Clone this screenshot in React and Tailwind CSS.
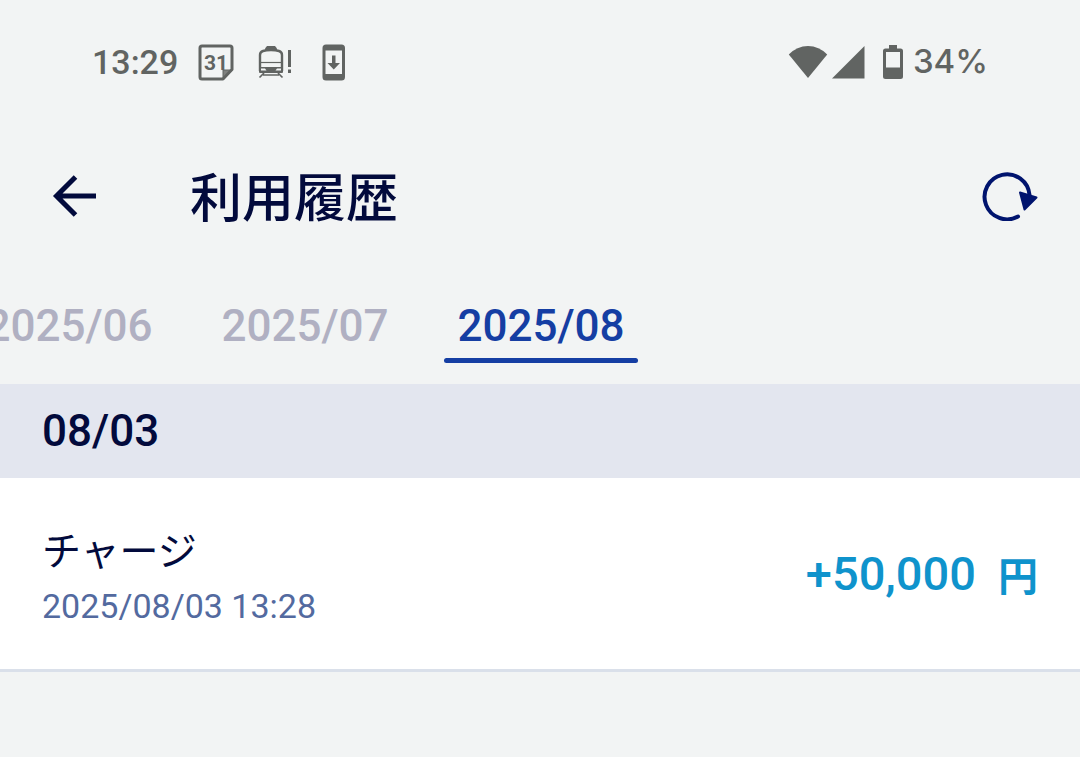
const tabs = [
  { label: '2025/06', active: false },
  { label: '2025/07', active: false },
  { label: '2025/08', active: true },
];

function CalendarIcon() {
  return (
    <svg width="36" height="37" viewBox="0 0 36 37" fill="none" stroke="#616462" aria-hidden="true">
      <path d="M4 2h28a2 2 0 0 1 2 2v21.500L25 35H4a2 2 0 0 1-2-2V4a2 2 0 0 1 2-2Z" strokeWidth="3" strokeLinejoin="round" />
      <path d="M25 35v-9h9Z" strokeWidth="1" fill="#616462" fillOpacity="0.800" />
      <text x="18" y="25.500" textAnchor="middle" fontSize="21" fontWeight="700" fill="#616462" stroke="none" className="font-['Roboto',sans-serif]">31</text>
    </svg>
  );
}

function TrainIcon() {
  return (
    <svg width="36" height="34" viewBox="0 0 36 34" fill="none" stroke="#616462" aria-hidden="true">
      <path d="M7 5V3.500L9 1h8l2 2.500V5Z" fill="#616462" stroke="none" />
      <path d="M2 26V10Q2 7 5 6t8-1 8 1 3 4v16" strokeWidth="2.400" />
      <path d="M2 17.500h22" strokeWidth="1.200" />
      <path d="M1 22h24v5q0 1-1 1H2q-1 0-1-1Z" fill="#616462" stroke="none" />
      <path d="M3 23.500h4l1.500 2H3ZM23 23.500h-4l-1.500 2H23Z" fill="#f2f4f4" stroke="none" />
      <path d="m6 28-4.500 4.500M20 28l4.500 4.500M5 30h16" strokeWidth="1.700" />
      <path d="M31.500 5v17" strokeWidth="3" />
      <path d="M30 24.500h3v3.500h-3Z" fill="#616462" stroke="none" />
    </svg>
  );
}

function UpdateIcon() {
  return (
    <svg width="24" height="37" viewBox="0 0 24 37" fill="#616462" aria-hidden="true">
      <path fillRule="evenodd" d="M4 .500h15.500Q23 .500 23 4v29q0 3.500-3.500 3.500H4Q.500 36.500.500 33V4Q.500.500 4 .500ZM3.500 6.500v23.500h16.500V6.500Z" />
      <path d="M10 11.500h3.500V19H18l-6.250 6.500L5.500 19H10Z" />
    </svg>
  );
}

function WifiIcon() {
  return (
    <svg width="40" height="34" viewBox="0 0 40 34" fill="#616462" aria-hidden="true">
      <path d="M20 33 .800 9.500Q9 1 20 1t19.200 8.500Z" />
    </svg>
  );
}

function SignalIcon() {
  return (
    <svg width="33" height="34" viewBox="0 0 33 34" fill="#616462" aria-hidden="true">
      <path d="M0 33.500 32.500 1v32.500Z" />
    </svg>
  );
}

function BatteryIcon() {
  return (
    <svg width="20" height="34" viewBox="0 0 20 34" fill="#616462" aria-hidden="true">
      <path fillRule="evenodd" d="M6 0h8v3.500h3.500Q20 3.500 20 6v25.500q0 2.500-2.500 2.500h-15Q0 34 0 31.500V6q0-2.500 2.500-2.500H6ZM3 7v15.500h14V7Z" />
    </svg>
  );
}

function BackIcon() {
  return (
    <svg width="44" height="44" viewBox="0 0 44 44" fill="none" stroke="#020a3c" strokeWidth="5" aria-hidden="true">
      <path d="M44 22H5M23.500 3 4.500 22l19 19" />
    </svg>
  );
}

function ReloadIcon() {
  return (
    <svg width="56" height="50" viewBox="0 0 56 50" aria-hidden="true">
      <path d="M36 45.500A22.500 22.500 0 1 1 47.500 24" fill="none" stroke="#00146e" strokeWidth="4" strokeLinecap="round" />
      <path d="M38 21.500 54.500 26.500 42.500 38.500Z" fill="#00146e" stroke="#00146e" strokeWidth="2" strokeLinejoin="round" />
    </svg>
  );
}

export default function App() {
  return (
    <div className="min-h-screen bg-[#f2f4f4] font-['Roboto','Noto_Sans_CJK_JP',sans-serif] text-[#020a3c]">
      <div className="flex h-31 items-center justify-between px-[92px] font-medium text-[#616462]">
        <div className="flex items-center">
          <span className="mr-5 text-[34px]">13:29</span>
          <span className="mr-6"><CalendarIcon /></span>
          <span className="mr-7"><TrainIcon /></span>
          <UpdateIcon />
        </div>
        <div className="flex items-center">
          <span className="mr-1"><WifiIcon /></span>
          <span className="mr-[18px]"><SignalIcon /></span>
          <span className="mr-[10px]"><BatteryIcon /></span>
          <span className="font-['Inter',sans-serif] text-[33px]">34%</span>
        </div>
      </div>

      <header className="flex h-36 items-center pr-[42px] pl-[52px]">
        <button type="button" aria-label="戻る"><BackIcon /></button>
        <h1 className="ml-[94px] flex-1 pt-2 text-[52px] leading-[60px] font-medium">利用履歴</h1>
        <button type="button" aria-label="更新"><ReloadIcon /></button>
      </header>

      <nav className="overflow-hidden pt-[31px] pb-[21px]">
        <div className="-ml-7 flex gap-[42px]">
          {tabs.map((tab) => (
            <button
              key={tab.label}
              type="button"
              aria-current={tab.active ? 'true' : undefined}
              className={tab.active ? 'w-[194px] shrink-0 text-[#153ea3]' : 'w-[194px] shrink-0 text-[#b0b0c2]'}
            >
              <span className="block pb-[5px] text-[44px] leading-[54px] font-medium">{tab.label}</span>
              <span className={tab.active ? 'block h-[5px] rounded-full bg-[#153ea3]' : 'block h-[5px]'} />
            </button>
          ))}
        </div>
      </nav>

      <section>
        <h2 className="bg-[#e3e6ef] px-[42px] text-[44px] leading-[94px] font-medium">08/03</h2>
        <ul>
          <li className="flex items-center justify-between border-b-3 border-[#dae0ea] bg-white px-[42px] pt-[45px] pb-[37px]">
            <div>
              <p className="text-[39px] leading-[58px]">チャージ</p>
              <p className="text-[34px] leading-[51px]">
                <time dateTime="2025-08-03T13:28" className="text-[#536a9f]">2025/08/03 13:28</time>
              </p>
            </div>
            <p className="flex items-center gap-[22px] text-[#0f93cc]">
              <span className="pb-2 text-[47px] leading-[60px] font-medium">+50,000</span>
              <span className="text-[40px] leading-[60px] font-bold">円</span>
            </p>
          </li>
        </ul>
      </section>
    </div>
  );
}
